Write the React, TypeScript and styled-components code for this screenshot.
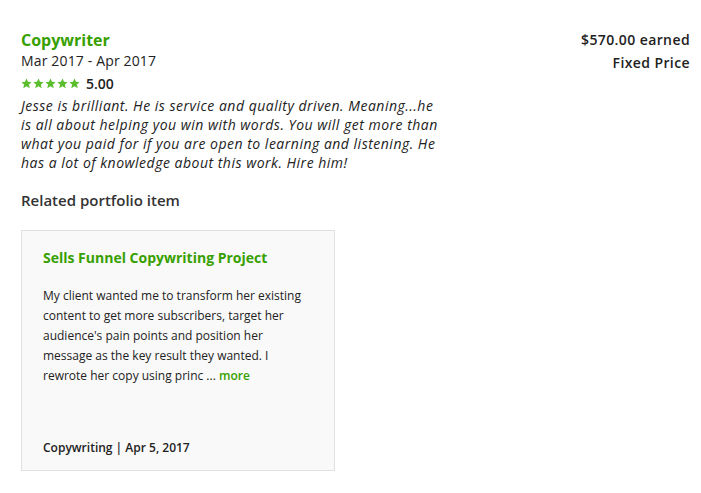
import React from "react";
import styled, { createGlobalStyle } from "styled-components";

const Global = createGlobalStyle`
  html, body { margin: 0; padding: 0; background: #fff; }
  body { font-family: "Open Sans", "Liberation Sans", sans-serif; color: #222; }
`;

const Page = styled.div`
  padding: 30px 11px 0 21px;
  display: flex;
  flex-direction: column;
`;

const Header = styled.div`
  display: flex;
  justify-content: space-between;
  align-items: flex-start;
`;

const Left = styled.div`
  display: flex;
  flex-direction: column;
  width: 425px;
`;

const Title = styled.div`
  color: #37a000;
  font-size: 16px;
  font-weight: 700;
  line-height: 20px;
`;

const Dates = styled.div`
  font-size: 14px;
  line-height: 20px;
  margin-top: 1px;
  color: #222;
  letter-spacing: 0.15px;
`;

const RatingRow = styled.div`
  display: flex;
  align-items: center;
  gap: 6px;
  margin-top: 2px;
  height: 20px;
`;

const Stars = styled.div`
  display: flex;
  gap: 1px;
`;

const Score = styled.span`
  font-size: 14px;
  font-weight: 600;
  color: #222;
`;

const Feedback = styled.p`
  margin: 3px 0 0;
  font-size: 14px;
  font-style: italic;
  line-height: 19px;
  letter-spacing: 0.5px;
  color: #222;
`;

const Right = styled.div`
  display: flex;
  flex-direction: column;
  align-items: flex-end;
  gap: 3px;
`;

const Meta = styled.div`
  font-size: 14px;
  font-weight: 600;
  line-height: 20px;
  letter-spacing: 0.4px;
  color: #222;
`;

const SectionTitle = styled.div`
  margin-top: 18px;
  font-size: 15px;
  font-weight: 600;
  color: #333;
  line-height: 20px;
`;

const Card = styled.div`
  margin-top: 20px;
  width: 270px;
  height: 210px;
  padding: 17px 21px 12px 21px;
  background: #f9f9f9;
  border: 1px solid #e0e0e0;
  display: flex;
  flex-direction: column;
`;

const CardTitle = styled.div`
  color: #37a000;
  font-size: 14px;
  font-weight: 700;
  line-height: 20px;
`;

const CardText = styled.p`
  margin: 18px 0 0;
  font-size: 12px;
  line-height: 20px;
  color: #222;
`;

const More = styled.span`
  color: #37a000;
  font-weight: 600;
`;

const CardFooter = styled.div`
  margin-top: auto;
  font-size: 12px;
  font-weight: 600;
  color: #222;
  line-height: 20px;
`;

const Star = () => (
  <svg width="11" height="11" viewBox="0 0 24 24">
    <path
      fill="#5cbd2f"
      d="M12 1l3.3 7.2 7.9.8-5.9 5.3 1.7 7.8L12 18.2l-7 3.9 1.7-7.8L.8 9l7.9-.8z"
    />
  </svg>
);

export default function App() {
  return (
    <>
      <Global />
      <Page>
        <Header>
          <Left>
            <Title>Copywriter</Title>
            <Dates>Mar 2017 - Apr 2017</Dates>
            <RatingRow>
              <Stars>
                {[0, 1, 2, 3, 4].map((i) => (
                  <Star key={i} />
                ))}
              </Stars>
              <Score>5.00</Score>
            </RatingRow>
            <Feedback>
              Jesse is brilliant. He is service and quality driven. Meaning...he is all about
              helping you win with words. You will get more than what you paid for if you are
              open to learning and listening. He has a lot of knowledge about this work. Hire
              him!
            </Feedback>
          </Left>
          <Right>
            <Meta>$570.00 earned</Meta>
            <Meta>Fixed Price</Meta>
          </Right>
        </Header>
        <SectionTitle>Related portfolio item</SectionTitle>
        <Card>
          <CardTitle>Sells Funnel Copywriting Project</CardTitle>
          <CardText>
            My client wanted me to transform her existing content to get more subscribers,
            target her audience's pain points and position her message as the key result they
            wanted. I rewrote her copy using princ ...&nbsp;<More>more</More>
          </CardText>
          <CardFooter>Copywriting | Apr 5, 2017</CardFooter>
        </Card>
      </Page>
    </>
  );
}
